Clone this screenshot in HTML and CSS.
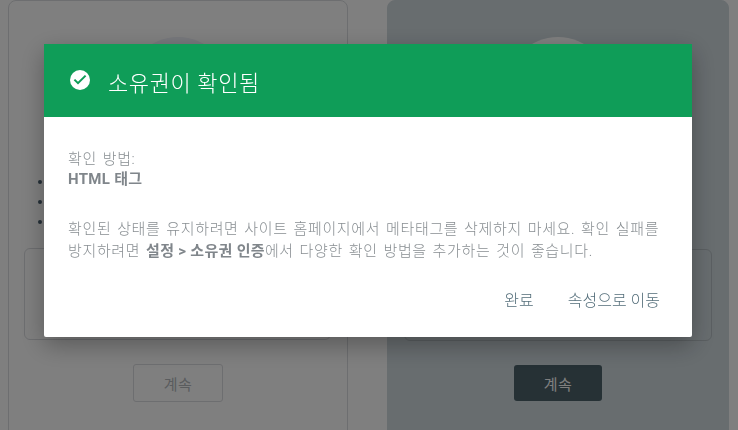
FILE: index.html
```html
<!DOCTYPE html>
<html lang="ko">
<head>
    <meta charset="UTF-8">
    <title>소유권 확인</title>
    <link rel="stylesheet" href="styles.css">
</head>
<body>
    <div class="page">
        <div class="card card-left">
            <div class="card-circle"></div>
            <ul class="card-list">
                <li></li>
                <li></li>
                <li></li>
            </ul>
            <div class="card-box"></div>
            <button class="card-button">계속</button>
        </div>
        <div class="card card-right">
            <div class="card-circle"></div>
            <div class="card-box"></div>
            <button class="card-button">계속</button>
        </div>
    </div>

    <div class="scrim"></div>

    <div class="dialog">
        <div class="dialog-header">
            <svg class="dialog-icon" viewBox="0 0 24 24" width="24" height="24">
                <path fill="#fff" d="M12 2a10 10 0 1 0 0 20a10 10 0 0 0 0-20z"/>
                <path fill="#0f9d58" d="M10 16.6l-4.3-4.3l1.4-1.4l2.9 2.9l6.9-6.9l1.4 1.4z"/>
            </svg>
            <h1>소유권이 확인됨</h1>
        </div>
        <div class="dialog-body">
            <p class="method">확인 방법:<br><b>HTML 태그</b></p>
            <p class="notice">확인된 상태를 유지하려면 사이트 홈페이지에서 메타태그를 삭제하지 마세요. 확인 실패를 방지하려면 <b>설정 &gt; 소유권 인증</b>에서 다양한 확인 방법을 추가하는 것이 좋습니다.</p>
        </div>
        <div class="dialog-actions">
            <button>완료</button>
            <button>속성으로 이동</button>
        </div>
    </div>
</body>
</html>
```

FILE: styles.css
```css
html, body {
    height: 100%;
}

body {
    margin: 0;
    overflow: hidden;
    background-color: #fff;
    font-family: Roboto, "Noto Sans CJK KR", sans-serif;
}

.page {
    display: flex;
    gap: 39px;
    padding-left: 8px;
    height: 430px;
    box-sizing: border-box;
    overflow: hidden;
}

.card {
    width: 340px;
    height: 460px;
    flex: none;
    box-sizing: border-box;
    border: 1px solid #dadce0;
    border-radius: 8px;
    padding: 36px 15px 0;
    display: flex;
    flex-direction: column;
    align-items: center;
}

.card-right {
    width: 342px;
    background-color: #d0dadf;
    border-color: #d0dadf;
}

.card-circle {
    width: 104px;
    height: 104px;
    flex: none;
    border-radius: 50%;
    background-color: #eef0f8;
}

.card-right .card-circle {
    background-color: #fff;
}

.card-list {
    align-self: flex-start;
    margin: 31px 0 0;
    padding-left: 14px;
    height: 76px;
    list-style: none;
}

.card-list li {
    width: 4px;
    height: 4px;
    margin: 8px 0 16px;
    border-radius: 50%;
    background-color: #4a6070;
}

.card-box {
    width: 307px;
    height: 92px;
    flex: none;
    box-sizing: border-box;
    border: 1px solid #dadce0;
    border-radius: 6px;
}

.card-left .card-box {
    margin-right: 1px;
}

.card-right .card-box {
    width: 308px;
    margin-top: 108px;
    border-color: #b6bfc4;
}

.card-button {
    width: 90px;
    height: 38px;
    margin-top: 24px;
    flex: none;
    border: 1px solid #dadce0;
    border-radius: 3px;
    background: none;
    color: #b4b8bc;
    font-family: inherit;
    font-size: 15px;
    letter-spacing: 0.5px;
}

.card-right .card-button {
    width: 88px;
    height: 36px;
    border: none;
    background-color: #4c626a;
    color: #fff;
}

.scrim {
    position: fixed;
    inset: 0;
    background-color: rgba(0, 0, 0, 0.5);
}

.dialog {
    position: fixed;
    left: 44px;
    top: 44px;
    width: 648px;
    height: 293px;
    display: flex;
    flex-direction: column;
    border-radius: 2px;
    background-color: #fff;
    box-shadow: 0 8px 24px rgba(0, 0, 0, 0.3);
}

.dialog-header {
    height: 73px;
    flex: none;
    display: flex;
    align-items: center;
    gap: 16px;
    padding: 0 24px;
    background-color: #0f9d58;
    color: #fff;
}

.dialog-icon {
    flex: none;
    margin-bottom: 1px;
}

.dialog-header h1 {
    margin: 0;
    font-size: 22px;
    font-weight: 300;
    letter-spacing: 0.6px;
}

.dialog-body {
    flex: 1;
    padding: 32px 24px 0;
    color: #888e92;
    font-size: 15px;
    font-weight: 300;
    letter-spacing: 0.65px;
    word-spacing: 1.5px;
    line-height: 20px;
}

.dialog-body p {
    margin: 0;
}

.dialog-body b {
    font-weight: 700;
    color: #80868b;
    letter-spacing: 0.3px;
    word-spacing: 0;
}

.dialog-body .method {
    margin-bottom: 29px;
}

.dialog-body .notice {
    line-height: 22px;
}

.dialog-actions {
    display: flex;
    justify-content: flex-end;
    gap: 34px;
    padding: 0 32px 26px;
}

.dialog-actions button {
    padding: 0;
    border: none;
    background: none;
    color: #546e7a;
    font-family: inherit;
    font-size: 16px;
    font-weight: 300;
}
```
